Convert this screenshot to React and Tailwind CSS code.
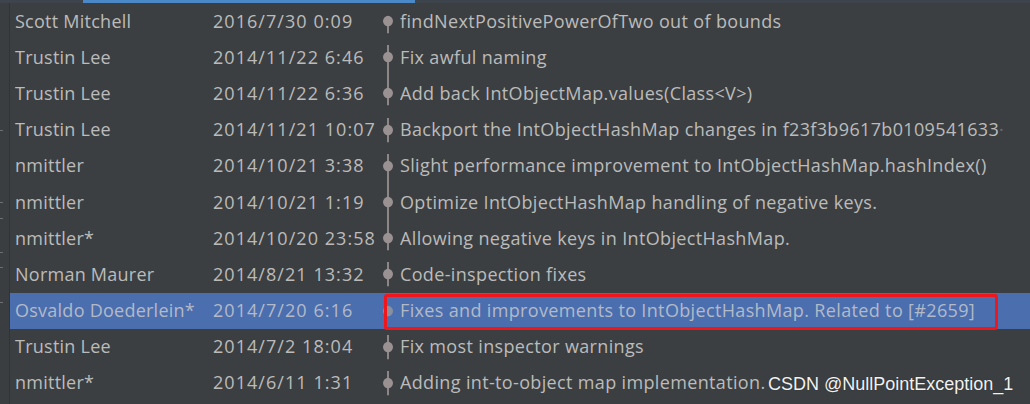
import React from "react";

const rows = [
  { a: "Scott Mitchell", d: "2016/7/30 0:09", m: "findNextPositivePowerOfTwo out of bounds", t: "none", b: "stub" },
  { a: "Trustin Lee", d: "2014/11/22 6:46", m: "Fix awful naming", t: "stub", b: "full" },
  { a: "Trustin Lee", d: "2014/11/22 6:36", m: "Add back IntObjectMap.values(Class<V>)", t: "full", b: "stub" },
  { a: "Trustin Lee", d: "2014/11/21 10:07", m: "Backport the IntObjectHashMap changes in f23f3b9617b0109541633", fade: true, t: "stub", b: "stub" },
  { a: "nmittler", d: "2014/10/21 3:38", m: "Slight performance improvement to IntObjectHashMap.hashIndex()", t: "stub", b: "full" },
  { a: "nmittler", d: "2014/10/21 1:19", m: "Optimize IntObjectHashMap handling of negative keys.", t: "full", b: "full" },
  { a: "nmittler*", d: "2014/10/20 23:58", m: "Allowing negative keys in IntObjectHashMap.", t: "full", b: "stub" },
  { a: "Norman Maurer", d: "2014/8/21 13:32", m: "Code-inspection fixes", t: "stub", b: "stub" },
  { a: "Osvaldo Doederlein*", d: "2014/7/20 6:16", m: "Fixes and improvements to IntObjectHashMap. Related to [#2659]", t: "none", b: "none", sel: true },
  { a: "Trustin Lee", d: "2014/7/2 18:04", m: "Fix most inspector warnings", t: "stub", b: "stub" },
  { a: "nmittler*", d: "2014/6/11 1:31", m: "Adding int-to-object map implementation.", t: "stub", b: "stub" },
];

function Graph({ t, b, sel }) {
  const line = "#8d8687";
  return (
    <svg width="24" height="100%" viewBox="0 0 24 36" preserveAspectRatio="none" className="h-full shrink-0">
      {t === "full" && <line x1="12" y1="0" x2="12" y2="18" stroke={line} strokeWidth="2" />}
      {t === "stub" && <line x1="12" y1="6" x2="12" y2="18" stroke={line} strokeWidth="2" />}
      {b === "full" && <line x1="12" y1="18" x2="12" y2="36" stroke={line} strokeWidth="2" />}
      {b === "stub" && <line x1="12" y1="18" x2="12" y2="30" stroke={line} strokeWidth="2" />}
      <ellipse cx="12" cy="18" rx="5" ry="5.2" fill={sel ? "#8a8f9e" : "#9a9192"} />
    </svg>
  );
}

const ticks = [130, 202, 218, 252, 267, 302];

export default function App() {
  return (
    <div className="w-[1030px] h-[404px] bg-[#3c3f41] overflow-hidden relative flex flex-col" style={{ fontFamily: '"Open Sans", "Noto Sans", sans-serif' }}>
      <div className="flex h-[3px] shrink-0">
        <div className="w-[83px] bg-[#3e444b]" />
        <div className="w-[332px] bg-[#4a88c7]" />
        <div className="flex-1 bg-[#3e444b]" />
      </div>
      <div className="flex flex-1 min-h-0">
        <div className="w-[10px] shrink-0 border-r border-[#313335] bg-[#3b3e40] relative">
          {ticks.map((y) => (
            <div key={y} className="absolute left-0 w-[3px] h-px bg-[#6d7072]" style={{ top: y - 3 }} />
          ))}
        </div>
        <div className="flex-1 flex flex-col min-w-0">
          {rows.map((r, i) => (
            <div
              key={i}
              className={`relative flex items-center h-[36.2px] shrink-0 text-[18px] whitespace-nowrap ${r.sel ? "bg-[#4b6eaf] text-[#b3bac7]" : "text-[#bbbbbb]"}`}
            >
              <div className="w-[203px] shrink-0 pl-[5px] tracking-[0.25px]">{r.a}</div>
              <div className="w-[163px] shrink-0 tracking-[1.05px]">{r.d}</div>
              <Graph t={r.t} b={r.b} sel={r.sel} />
              <div className="flex-1 min-w-0 overflow-hidden tracking-[0.35px]">
                {r.m}
                {r.fade && <span className="text-[#6a6c6e]">·</span>}
              </div>
              {r.sel && (
                <div className="absolute left-[374px] w-[614px] top-[1px] bottom-[-1px] border-[3px] border-[#f0161c] rounded-[3px]" />
              )}
            </div>
          ))}
        </div>
      </div>
      <div
        className="absolute left-[768px] top-[371px] text-[18px] text-[#f2f2f2] whitespace-nowrap"
        style={{ fontFamily: '"Liberation Sans", Arial, sans-serif', textShadow: "0 0 1px #222" }}
      >
        CSDN @NullPointException_1
      </div>
    </div>
  );
}
